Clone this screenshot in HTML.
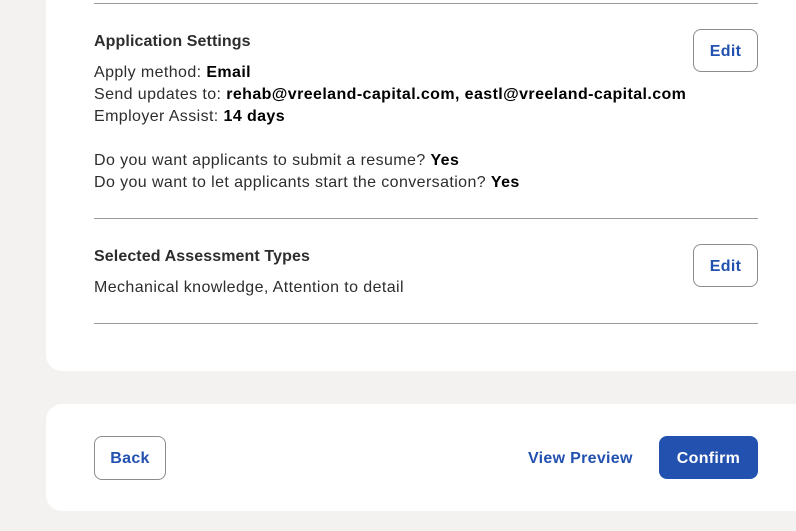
<!DOCTYPE html>
<html><head><style>
body{margin:0;width:796px;height:531px;background:#f3f2f1;font-family:"Liberation Sans",sans-serif;color:#2d2d2d;position:relative;overflow:hidden}
.card{position:absolute;background:#fff;left:46px;width:780px}
.t{position:absolute;left:94px;font-size:16px;letter-spacing:0.4px;white-space:nowrap;line-height:22px}
.h{font-weight:bold;font-size:16px;letter-spacing:0.1px;color:#2d2d2d}
b{color:#000}
.line{position:absolute;left:94px;width:664px;height:1px;background:#9a9a9a}
.btn{position:absolute;box-sizing:border-box;border:1px solid #8c8c8c;border-radius:8px;font-weight:bold;font-size:16px;letter-spacing:0.3px;color:#2251b0;display:flex;align-items:center;justify-content:center;background:#fff;padding-top:2px}
</style></head><body>
<div class="card" style="top:-20px;height:391px;border-radius:16px"></div>
<div class="line" style="top:3px"></div>
<div class="t h" style="top:31px">Application Settings</div>
<div class="t" style="top:62px">Apply method: <b>Email</b><br>Send updates to: <b>rehab@vreeland-capital.com, eastl@vreeland-capital.com</b><br>Employer Assist: <b>14 days</b><br><br>Do you want applicants to submit a resume? <b>Yes</b><br>Do you want to let applicants start the conversation? <b>Yes</b></div>
<div class="btn" style="left:693px;top:29px;width:65px;height:43px">Edit</div>
<div class="line" style="top:218px"></div>
<div class="t h" style="top:246px">Selected Assessment Types</div>
<div class="t" style="top:277px">Mechanical knowledge, Attention to detail</div>
<div class="btn" style="left:693px;top:244px;width:65px;height:43px">Edit</div>
<div class="line" style="top:323px"></div>
<div class="card" style="top:404px;height:107px;border-radius:16px"></div>
<div class="btn" style="left:94px;top:436px;width:72px;height:44px">Back</div>
<div class="t" style="left:528px;top:448px;font-weight:bold;color:#2251b0;letter-spacing:0.3px">View Preview</div>
<div class="btn" style="left:659px;top:436px;width:99px;height:43px;background:#2251b0;border:none;color:#fff">Confirm</div>
</body></html>
